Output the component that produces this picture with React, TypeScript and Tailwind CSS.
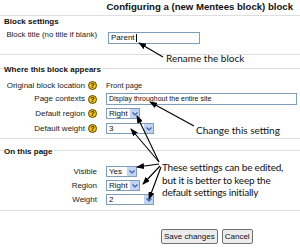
import React from 'react';

const ui = { fontFamily: '"Liberation Sans", Arial, sans-serif' };
const note = { fontFamily: 'Lato, "Open Sans", sans-serif' };

function Help() {
  return (
    <span className="ml-[3px] inline-flex h-[9px] w-[9px] items-center justify-center rounded-full border border-[#5c4a00] bg-[#f4c20d] text-[7px] font-bold leading-none text-[#1a1a1a]">
      ?
    </span>
  );
}

function Select({ value, width }: { value: string; width: string }) {
  return (
    <div className={`flex h-[11px] items-stretch border border-[#7f9db9] bg-white ${width}`}>
      <span className="flex flex-1 items-center pl-[2px] text-[8px] leading-none text-[#111]">{value}</span>
      <span className="flex w-[9px] items-center justify-center bg-[#c3d3f3]">
        <svg width="6" height="4" viewBox="0 0 6 4">
          <path d="M0.5 0.5 L3 3 L5.5 0.5" fill="none" stroke="#3b5fa8" strokeWidth="1.2" />
        </svg>
      </span>
    </div>
  );
}

function Row({ label, help, children, className }: { label: string; help?: boolean; children: React.ReactNode; className: string }) {
  return (
    <div className={`grid grid-cols-[97px_1fr] gap-x-[9px] ${className}`}>
      <div className="flex items-center justify-end whitespace-nowrap text-[8px] leading-[10px] text-[#222]">
        {label}
        {help && <Help />}
      </div>
      <div className="flex items-center">{children}</div>
    </div>
  );
}

function Legend({ children }: { children: React.ReactNode }) {
  return (
    <div className="-mt-[4px] flex h-[10px] items-center pl-[4px]">
      <span className="bg-white pr-[2px] text-[8px] font-bold leading-[10px] text-[#111]">{children}</span>
    </div>
  );
}

export default function App() {
  return (
    <div className="relative h-[248px] w-[300px] overflow-hidden bg-white" style={ui}>
      {/* Title */}
      <div className="flex h-[15px] items-center justify-end pr-[7px] text-[9.6px] font-bold text-[#111]">
        Configuring a (new Mentees block) block
      </div>

      {/* Block settings */}
      <div className="border-y border-[#dedede] pb-[10px]">
        <div className="flex h-[8px] items-center pl-[4px] pt-[3px] text-[8px] font-bold text-[#111]">Block settings</div>
        <div className="mt-[8px] grid grid-cols-[97px_1fr] gap-x-[11px]">
          <div className="-mt-[2px] whitespace-nowrap text-right text-[7.8px] leading-[10px] text-[#222]">Block title (no title if blank)</div>
          <div className="flex h-[12px] w-[92px] items-center border border-[#7f9db9] pl-[2px] text-[8px] text-[#111]">
            Parent<span className="ml-[1px] h-[8px] w-[1px] bg-black" />
          </div>
        </div>
      </div>

      {/* Where this block appears */}
      <div className="mt-[13px] border-y border-[#dedede] pb-[4px]">
        <Legend>Where this block appears</Legend>
        <Row label="Original block location" help className="mt-[5px] h-[10px]">
          <span className="text-[7.5px] text-[#222]">Front page</span>
        </Row>
        <Row label="Page contexts" help className="mt-[3px] h-[12px]">
          <div className="flex h-[12px] w-[191px] items-center border border-[#7f9db9] pl-[2px] text-[7px] text-[#111]">
            Display throughout the entire site
          </div>
        </Row>
        <Row label="Default region" help className="mt-[3px] h-[11px]">
          <Select value="Right" width="w-[34px]" />
        </Row>
        <Row label="Default weight" help className="mt-[4px] h-[11px]">
          <Select value="3" width="w-[48px]" />
        </Row>
      </div>

      {/* On this page */}
      <div className="mt-[11px] border-y border-[#dedede] pb-[5px]">
        <Legend>On this page</Legend>
        <Row label="Visible" className="mt-[9px] h-[11px]">
          <Select value="Yes" width="w-[31px]" />
        </Row>
        <Row label="Region" className="mt-[3px] h-[11px]">
          <Select value="Right" width="w-[34px]" />
        </Row>
        <Row label="Weight" className="mt-[3px] h-[11px]">
          <Select value="2" width="w-[48px]" />
        </Row>
      </div>

      {/* Buttons */}
      <div className="mt-[18px] flex gap-[4px] pl-[161px]">
        <button className="h-[15px] whitespace-nowrap rounded-[2px] border border-[#707070] bg-[#ececec] px-[2px] text-[8px] leading-none text-[#111]">Save changes</button>
        <button className="h-[15px] whitespace-nowrap rounded-[2px] border border-[#707070] bg-[#ececec] px-[2px] text-[8px] leading-none text-[#111]">Cancel</button>
      </div>

      {/* Annotations */}
      <svg className="pointer-events-none absolute left-0 top-0" width="300" height="248" viewBox="0 0 300 248">
        <defs>
          <marker id="ah" markerWidth="8" markerHeight="6" refX="7" refY="3" orient="auto" markerUnits="userSpaceOnUse">
            <path d="M0 0 L8 3 L0 6 Z" fill="#000" />
          </marker>
        </defs>
        <g stroke="#000" strokeWidth="1.1" fill="none" markerEnd="url(#ah)">
          <line x1="163" y1="57" x2="139" y2="43" />
          <line x1="194" y1="126" x2="150" y2="102" />
          <line x1="159" y1="162" x2="137" y2="116" />
          <line x1="159" y1="162" x2="131" y2="129" />
          <line x1="159" y1="164" x2="137" y2="167" />
          <line x1="160" y1="166" x2="143" y2="184" />
          <line x1="161" y1="167" x2="149" y2="199" />
        </g>
      </svg>
      <div className="absolute left-[166px] top-[52px] whitespace-nowrap text-[10px] leading-[12px] text-[#111]" style={note}>Rename the block</div>
      <div className="absolute left-[196px] top-[124px] whitespace-nowrap text-[10px] leading-[12px] text-[#111]" style={note}>Change this setting</div>
      <div className="absolute left-[162px] top-[161px] whitespace-nowrap text-[10px] leading-[12.5px] tracking-[-0.2px] text-[#111]" style={note}>
        These settings can be edited,
        <br />
        but it is better to keep the
        <br />
        default settings initially
      </div>
    </div>
  );
}
